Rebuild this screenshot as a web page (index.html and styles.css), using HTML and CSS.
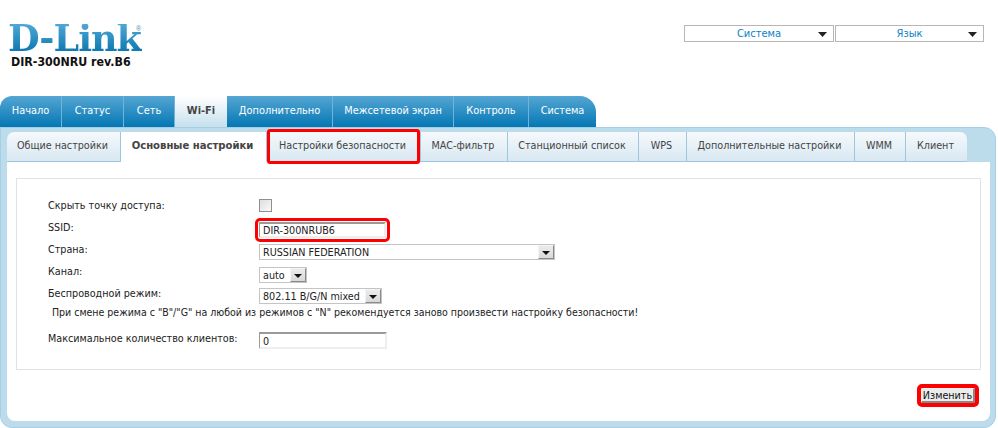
FILE: index.html
```html
<!DOCTYPE html>
<html lang="ru">
<head>
<meta charset="utf-8">
<title>D-Link DIR-300NRU</title>
<link rel="stylesheet" href="styles.css">
</head>
<body>
<header class="header">
  <div class="brand">
    <div class="logo">D-Link<span class="reg">®</span></div>
    <div class="model">DIR-300NRU rev.B6</div>
  </div>
  <nav class="top-menus">
    <div class="top-menu"><span class="top-label">Система</span><svg class="top-arrow" width="9" height="5" viewBox="0 0 9 5"><path d="M0 0h9L4.5 5z"/></svg></div>
    <div class="top-menu"><span class="top-label">Язык</span><svg class="top-arrow" width="9" height="5" viewBox="0 0 9 5"><path d="M0 0h9L4.5 5z"/></svg></div>
  </nav>
</header>
<nav class="main-tabs">
  <a class="main-tab">Начало</a>
  <a class="main-tab">Статус</a>
  <a class="main-tab">Сеть</a>
  <a class="main-tab active">Wi-Fi</a>
  <a class="main-tab">Дополнительно</a>
  <a class="main-tab">Межсетевой экран</a>
  <a class="main-tab">Контроль</a>
  <a class="main-tab">Система</a>
</nav>
<main class="panel">
  <nav class="sub-tabs">
    <a class="sub-tab">Общие настройки</a>
    <a class="sub-tab active">Основные настройки</a>
    <a class="sub-tab marked">Настройки безопасности</a>
    <a class="sub-tab">MAC-фильтр</a>
    <a class="sub-tab">Станционный список</a>
    <a class="sub-tab">WPS</a>
    <a class="sub-tab">Дополнительные настройки</a>
    <a class="sub-tab">WMM</a>
    <a class="sub-tab">Клиент</a>
  </nav>
  <div class="content">
    <section class="form-box">
      <div class="row"><label class="label">Скрыть точку доступа:</label><input class="check" type="checkbox"></div>
      <div class="row"><label class="label">SSID:</label><input class="field field-marked" type="text" value="DIR-300NRUB6"></div>
      <div class="row"><label class="label">Страна:</label>
        <div class="select select-country"><span class="select-text">RUSSIAN FEDERATION</span><span class="select-btn"><svg width="8" height="4" viewBox="0 0 8 4"><path d="M0 0h8L4 4z"/></svg></span></div></div>
      <div class="row"><label class="label">Канал:</label>
        <div class="select select-channel"><span class="select-text">auto</span><span class="select-btn"><svg width="8" height="4" viewBox="0 0 8 4"><path d="M0 0h8L4 4z"/></svg></span></div></div>
      <div class="row row-mode"><label class="label">Беспроводной режим:</label>
        <div class="select select-mode"><span class="select-text">802.11 B/G/N mixed</span><span class="select-btn"><svg width="8" height="4" viewBox="0 0 8 4"><path d="M0 0h8L4 4z"/></svg></span></div></div>
      <p class="note">При смене режима с "B"/"G" на любой из режимов с "N" рекомендуется заново произвести настройку безопасности!</p>
      <div class="row row-max"><label class="label">Максимальное количество клиентов:</label><input class="field" type="text" value="0"></div>
    </section>
    <div class="actions"><button class="submit" type="button">Изменить</button></div>
  </div>
</main>
</body>
</html>
```

FILE: styles.css
```css
* { box-sizing: border-box; }
html, body { margin: 0; height: 428px; overflow: hidden; background: #fff; }
body { font: 10.7px "DejaVu Sans Condensed", "DejaVu Sans", sans-serif; color: #222; }

.header { height: 96px; display: flex; justify-content: space-between; padding: 24px 14px 0 8px; }
.logo { position: relative; width: 134px; height: 29px; font: bold 36.5px/29px "DejaVu Serif", serif; letter-spacing: -1px; white-space: nowrap;
  background: linear-gradient(#4ea8d6, #0a76ad); -webkit-background-clip: text; background-clip: text; color: transparent; }
.reg { position: absolute; left: 128px; top: 1px; font: 7px/8px "Liberation Sans", sans-serif; letter-spacing: 0; color: #3c92bf; }
.model { margin: 2px 0 0 3px; font-weight: bold; font-size: 12.3px; line-height: 14px; color: #111; }

.top-menus { display: flex; gap: 1px; padding-top: 1px; }
.top-menu { width: 150px; height: 17px; border: 1px solid #b7b7b7; position: relative; display: flex; justify-content: center; align-items: center; font-size: 11px; }
.top-menu + .top-menu { width: 149px; }
.top-label { color: #0883c4; }
.top-arrow { position: absolute; right: 6px; top: 6px; fill: #222; }

.main-tabs { height: 31px; width: 596px; display: grid; grid-template-columns: 62px 62px 51px 52px 106px 121px 75px 67px;
  background: linear-gradient(#55a6d3, #0477b4); border-radius: 12px 16px 0 0; overflow: hidden; font-size: 10.9px; }
.main-tab { display: flex; align-items: center; justify-content: center; padding-bottom: 2px; color: #fff; border-right: 1px solid #6fb5da; }
.main-tab:last-child { border-right: 0; }
.main-tab.active { background: linear-gradient(#fff, #c5e0ee); color: #444; font-weight: bold; border-right: 0; }

.panel { width: 996px; height: 301px; padding: 5px 5px 6px 6px; background: #bcdcec; border: 1px solid #a6cfe4; border-radius: 0 12px 12px 12px; display: flex; flex-direction: column; }
.sub-tabs { height: 30px; display: grid; grid-template-columns: 114px 146px 154px 87px 131px 48px 168px 51px 61px; justify-content: start; margin-top: -1px; }
.sub-tab { position: relative; display: flex; align-items: center; justify-content: center; padding: 0 2px 2px 0; color: #444;
  background: linear-gradient(#f5f9fc, #d8e8f2); border-right: 1px solid #9cc7df; border-bottom: 1px solid #9cc7df; }
.sub-tab:first-child { border-radius: 7px 0 0 0; }
.sub-tab:last-child { border-radius: 0 7px 0 0; border-right: 0; }
.sub-tab.active { background: #fff; font-weight: bold; font-size: 11.2px; border-bottom-color: #fff; }
.sub-tab.marked::after { content: ""; position: absolute; left: 0; right: 0; top: -3px; bottom: -3px; border: 3px solid #f00; border-radius: 3px; }

.content { flex: 1; background: #fff; border-radius: 0 0 8px 8px; padding: 16px 10px 0 9px; display: flex; flex-direction: column; }
.form-box { height: 192px; width: 965px; border: 1px solid #e2e2e2; padding: 19px 0 0 31px; }

.row { height: 22px; display: flex; align-items: flex-start; }
.label { width: 211px; padding-top: 1px; line-height: 14px; color: #222; }
.check { appearance: none; margin: 1px 0 0; width: 13px; height: 13px; border: 1px solid #8e8f8f; background: linear-gradient(135deg, #dedede, #fafafa); }
.field { width: 128px; height: 16px; margin: 2px 0 0; padding: 1px 0 0 3px; border: 2px solid #eee; border-top-color: #9a9a9a; border-left: 1px solid #9a9a9a; font: inherit; color: #222; background: #fff; outline: 0; }
.field-marked { outline: 3px solid #f00; outline-offset: 1px; border-radius: 1px; width: 127px; }
.select { height: 16px; margin-top: 2px; display: flex; align-items: stretch; justify-content: space-between; padding: 0 0 0 3px; border: 1px solid #c4c4c4; color: #222; background: #fff; }
.select-text { white-space: nowrap; line-height: 16px; }
.select-btn { width: 16px; display: flex; align-items: center; justify-content: center; border: 1px solid #f4f4f4; border-right-color: #8a8a8a; border-bottom-color: #8a8a8a; background: linear-gradient(#ececec, #d8d8d8); }
.select-btn svg { fill: #111; margin-top: 2px; }
.select-country { width: 296px; }
.select-channel { width: 48px; margin-top: 3px; }
.select-mode { width: 123px; height: 16px; }
.row-mode { height: 18px; }
.note { margin: 0; padding-left: 4px; font-size: 10.5px; line-height: 16px; color: #222; }
.row-max { margin-top: 11px; }
.row-max .field { margin-top: 1px; height: 17px; }

.actions { display: flex; justify-content: flex-end; padding: 18px 5px 0 0; }
.submit { width: 54px; height: 15px; padding: 0; border: 1px solid #888; border-top-color: #f2f2f2; border-left-color: #f2f2f2; border-right-width: 2px; border-bottom-width: 2px; background: #ececec; font: inherit; line-height: 11px; color: #111; outline: 4px solid #f00; border-radius: 1px; }
```
